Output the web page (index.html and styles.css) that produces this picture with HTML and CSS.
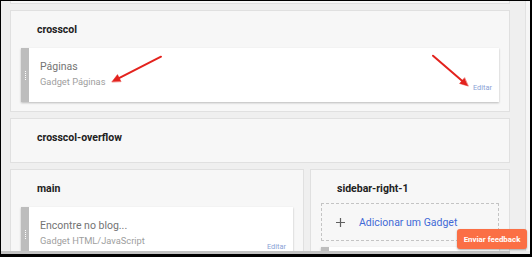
FILE: index.html
```
<!DOCTYPE html>
<html lang="pt">
<head>
<meta charset="utf-8">
<link rel="stylesheet" href="styles.css">
</head>
<body>
<div class="frame">
  <div class="viewport">
    <div class="stack">
      <div class="stub"></div>
      <section class="section">
        <div class="title">crosscol</div>
        <div class="card">
          <div class="handle"><span class="dots"></span></div>
          <div class="card-body">
            <div class="card-text">
              <div class="card-title">Páginas</div>
              <div class="card-sub">Gadget Páginas</div>
            </div>
            <span class="edit">Editar</span>
          </div>
        </div>
      </section>
      <section class="section section-empty">
        <div class="title title-empty">crosscol-overflow</div>
      </section>
      <div class="row">
        <section class="section section-main">
          <div class="title">main</div>
          <div class="card">
            <div class="handle"><span class="dots"></span></div>
            <div class="card-body">
              <div class="card-text">
                <div class="card-title">Encontre no blog...</div>
                <div class="card-sub">Gadget HTML/JavaScript</div>
              </div>
              <span class="edit">Editar</span>
            </div>
          </div>
        </section>
        <section class="section section-side">
          <div class="title title-side">sidebar-right-1</div>
          <div class="add">
            <svg class="plus" width="9" height="9" viewBox="0 0 9 9"><path d="M4.5 0V9M0 4.5H9" stroke="#5f5f5f" stroke-width="1.2" fill="none"/></svg>
            <span class="add-label">Adicionar um Gadget</span>
          </div>
          <div class="card card-side">
            <div class="handle"><span class="dots"></span></div>
            <div class="card-body"></div>
          </div>
        </section>
      </div>
    </div>
  </div>
  <div class="vtrack"></div>
  <div class="hbar"><div class="hthumb"></div></div>
  <button class="feedback">Enviar feedback</button>
  <svg class="arrows" width="532" height="257" viewBox="0 0 532 257">
    <g stroke="#e3221d" stroke-width="2" stroke-linecap="round" fill="#e3221d">
      <line x1="161" y1="56.7" x2="119.5" y2="77.9"/>
      <polygon points="112,81.7 117.5,74.6 120.9,81.3" stroke-width="0.5"/>
      <line x1="433" y1="55.7" x2="462.3" y2="81.1"/>
      <polygon points="468,86 459.6,83.5 464.4,77.9" stroke-width="0.5"/>
    </g>
  </svg>
</div>
</body>
</html>
```
FILE: styles.css
```
* { box-sizing: border-box; }
html, body { margin: 0; padding: 0; }
body { font-family: Roboto, "Noto Sans", sans-serif; background: #fff; }

.frame {
  position: relative;
  width: 532px;
  height: 257px;
  border-style: solid;
  border-color: #000;
  border-width: 1px 2px 3px 1px;
  background: #efefef;
  display: grid;
  grid-template-columns: 1fr 5px;
  grid-template-rows: 1fr 3px;
  overflow: hidden;
}

.viewport {
  overflow: hidden;
  padding-left: 9px;
}

.vtrack {
  background: #f6f6f6;
  border-left: 1px solid #e2e2e2;
}

.hbar {
  grid-column: 1 / 3;
  background: #ececec;
}
.hthumb {
  width: 509px;
  height: 100%;
  background: #c2c2c2;
}

.stack {
  width: 500px;
  display: flex;
  flex-direction: column;
  gap: 6px;
}

.stub {
  height: 3px;
  background: #f7f7f7;
  border: 1px solid #e0e0e0;
  border-top: 0;
}

.section {
  background: #f7f7f7;
  border: 1px solid #e0e0e0;
  padding: 11px 10px 9px 10px;
}
.section-empty { padding-bottom: 16px; }

.row {
  display: flex;
  gap: 6px;
  align-items: flex-start;
}
.section-main { width: 294px; height: 120px; }
.section-side { flex: 1; height: 120px; }

.title {
  padding-left: 16px;
  font-size: 10.5px;
  line-height: 16px;
  font-weight: 700;
  color: #212121;
  margin-bottom: 10px;
}
.title-empty { margin-bottom: 0; }
.title-side { margin-bottom: 6px; }

.card {
  display: flex;
  height: 54px;
  background: #fff;
  box-shadow: 0 1px 2px rgba(0, 0, 0, 0.25);
}
.handle {
  width: 8px;
  background: #bdbdbd;
  display: flex;
  align-items: center;
  justify-content: center;
}
.dots {
  width: 1px;
  height: 9px;
  background: repeating-linear-gradient(#ffffff 0 1px, transparent 1px 2px);
}
.card-body {
  flex: 1;
  display: flex;
  align-items: flex-end;
  padding: 11px 7px 12px 11px;
}
.card-text {
  flex: 1;
  align-self: flex-start;
}
.card-title {
  font-size: 10.5px;
  line-height: 15px;
  color: #737373;
}
.card-sub {
  font-size: 9.3px;
  line-height: 16px;
  color: #9e9e9e;
}
.edit {
  font-size: 7.4px;
  line-height: 10px;
  color: #8aa2d6;
  margin-bottom: -3px;
}

.add {
  height: 38px;
  border: 1px dashed #c4c4c4;
  display: flex;
  align-items: center;
  padding-left: 14px;
  gap: 14px;
}
.plus { display: block; }
.add-label {
  font-size: 10.5px;
  color: #3f6ad6;
}
.card-side { margin-top: 6px; }

.feedback {
  position: absolute;
  left: 456px;
  top: 228px;
  width: 70px;
  height: 20px;
  border: 0;
  border-radius: 3px;
  background: #fb6f45;
  color: #fff;
  font-family: Roboto, "Noto Sans", sans-serif;
  font-weight: 700;
  font-size: 7.9px;
  padding: 0;
  box-shadow: 0 1px 2px rgba(0, 0, 0, 0.3);
}

.arrows {
  position: absolute;
  left: -1px;
  top: -1px;
  pointer-events: none;
}
```
